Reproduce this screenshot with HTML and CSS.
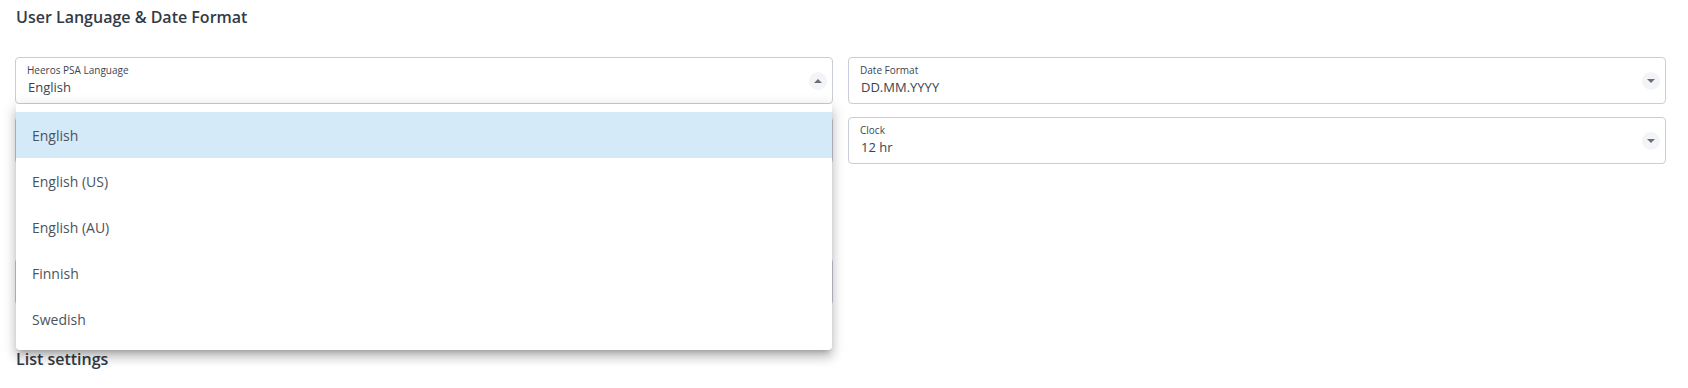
FILE: index.html
```html
<!DOCTYPE html>
<html lang="en">
<head>
<meta charset="utf-8">
<title>User Language &amp; Date Format</title>
<link rel="stylesheet" href="styles.css">
</head>
<body>
<div class="page">
  <h2 class="section-title">User Language &amp; Date Format</h2>

  <div class="grid">
    <div class="field is-open">
      <div class="field-body">
        <div class="field-label">Heeros PSA Language</div>
        <div class="field-value">English</div>
      </div>
      <span class="arrow-btn"><span class="tri tri-up"></span></span>
      <ul class="menu">
        <li class="menu-item is-active">English</li>
        <li class="menu-item">English (US)</li>
        <li class="menu-item">English (AU)</li>
        <li class="menu-item">Finnish</li>
        <li class="menu-item">Swedish</li>
      </ul>
    </div>

    <div class="field">
      <div class="field-body">
        <div class="field-label">Date Format</div>
        <div class="field-value">DD.MM.YYYY</div>
      </div>
      <span class="arrow-btn"><span class="tri tri-down"></span></span>
    </div>

    <div class="field field-covered"></div>

    <div class="field">
      <div class="field-body">
        <div class="field-label">Clock</div>
        <div class="field-value">12 hr</div>
      </div>
      <span class="arrow-btn"><span class="tri tri-down"></span></span>
    </div>
  </div>

  <div class="grid grid-lower">
    <div class="field field-covered"></div>
  </div>

  <h2 class="section-title section-title-list">List settings</h2>
</div>
</body>
</html>
```

FILE: styles.css
```css
* {
  box-sizing: border-box;
}

html, body {
  margin: 0;
  padding: 0;
  background: #ffffff;
  overflow: hidden;
}

body {
  font-family: "Open Sans", "Noto Sans", "Liberation Sans", sans-serif;
  color: #2b3440;
}

.page {
  padding: 6px 22px 0 15px;
}

.section-title {
  margin: 0 0 0 1px;
  font-size: 16px;
  line-height: 22px;
  font-weight: 600;
  color: #333b46;
}

.section-title-list {
  margin-top: 43px;
}

.grid {
  display: grid;
  grid-template-columns: 1fr 1fr;
  column-gap: 15px;
  row-gap: 13px;
  margin-top: 29px;
}

.grid-lower {
  margin-top: 94px;
}

.field {
  position: relative;
  display: flex;
  align-items: center;
  height: 47px;
  border: 1px solid #c9cdd8;
  border-radius: 4px;
  background: #ffffff;
  padding: 6px 5px 7px 11px;
}

.field-body {
  flex: 1;
  min-width: 0;
  align-self: flex-start;
}

.field-label {
  font-size: 10px;
  line-height: 12px;
  color: #3b4552;
}

.field-value {
  margin-top: 2px;
  padding-left: 1px;
  font-size: 13px;
  line-height: 18px;
  color: #3a4450;
}

.arrow-btn {
  display: flex;
  align-items: center;
  justify-content: center;
  width: 18px;
  height: 18px;
  border-radius: 50%;
  background: #f3f4f8;
  margin-top: 1px;
}

.tri {
  width: 0;
  height: 0;
  border-left: 4px solid transparent;
  border-right: 4px solid transparent;
}

.tri-up {
  border-bottom: 4px solid #6c6f76;
}

.tri-down {
  border-top: 4px solid #6c6f76;
}

.menu {
  position: absolute;
  top: 46px;
  left: 0;
  right: 0;
  z-index: 10;
  margin: 0;
  padding: 8px 0;
  list-style: none;
  background: #ffffff;
  border-radius: 0 0 4px 4px;
  box-shadow:
    0 5px 5px -3px rgba(0, 0, 0, 0.2),
    0 8px 10px 1px rgba(0, 0, 0, 0.14),
    0 3px 14px 2px rgba(0, 0, 0, 0.12);
}

.menu-item {
  height: 46px;
  display: flex;
  align-items: center;
  padding-left: 16px;
  font-size: 14px;
  color: #4a5360;
}

.menu-item.is-active {
  background: #d5eaf9;
}
```
